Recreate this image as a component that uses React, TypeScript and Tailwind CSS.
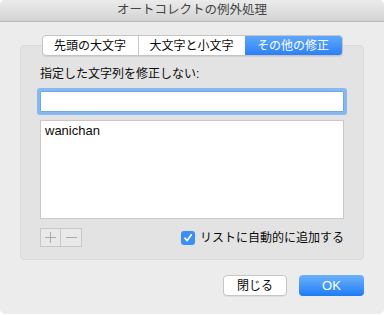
import React from "react";

const tabs = ["先頭の大文字", "大文字と小文字", "その他の修正"];

const App = () => {
  const [active, setActive] = React.useState(2);
  const [autoAdd, setAutoAdd] = React.useState(true);
  const [text, setText] = React.useState("");

  return (
    <div className="w-[384px] h-[315px] bg-white font-['Liberation_Sans','Noto_Sans_CJK_JP',sans-serif] text-[12px] text-[#0a0a0a]">
      <div className="flex flex-col h-[314px] bg-[#ececec] rounded-[5px] overflow-hidden">
        {/* title bar */}
        <div className="h-[22px] shrink-0 flex items-center justify-center bg-gradient-to-b from-[#ebebeb] to-[#d3d3d3] border-b border-[#b9b9b9] text-[#444] text-[12.5px] leading-none">
          オートコレクトの例外処理
        </div>

        <div className="px-[20px] pt-[13px] flex flex-col">
          {/* segmented tabs */}
          <div className="relative z-10 flex justify-center">
            <div className="flex h-[21px] rounded-[4px] border border-[#c4c4c4] bg-white shadow-[0_1px_0_rgba(0,0,0,0.08)] overflow-hidden">
              {tabs.map((t, i) => (
                <button
                  key={t}
                  onClick={() => setActive(i)}
                  className={
                    "flex items-center justify-center leading-none " +
                    (i === 0 ? "w-[95px] " : i === 1 ? "w-[107px] border-l border-[#c8c8c8] " : "w-[97px] ") +
                    (active === i
                      ? "bg-gradient-to-b from-[#5ea8fc] to-[#2a80f7] text-white"
                      : "text-[#0a0a0a]")
                  }
                >
                  {t}
                </button>
              ))}
            </div>
          </div>

          {/* group box */}
          <div className="-mt-[11px] h-[215px] rounded-[4px] bg-[#e3e3e3] border border-[#dadada] px-[19px] pt-[20px] flex flex-col">
            <div className="leading-[16px] h-[16px]">指定した文字列を修正しない:</div>
            <input
              value={text}
              onChange={(e) => setText(e.target.value)}
              className="mt-[9px] h-[21px] w-[304px] bg-white border border-[#6ea6e6] shadow-[0_0_0_3px_#86b9ef] rounded-[1px] outline-none px-1 text-[13px]"
            />
            <div className="mt-[8px] h-[99px] w-[304px] bg-white border border-[#c8c8c8] px-[4px] pt-[2px] text-[13px] leading-[16px]">
              wanichan
            </div>
            <div className="mt-[9px] flex items-center justify-between w-[304px]">
              <div className="flex h-[19px] border border-[#c7c7c7] bg-[#e9e9e9]">
                <div className="w-[20px] flex items-center justify-center border-r border-[#c7c7c7]">
                  <svg width="11" height="11" viewBox="0 0 11 11">
                    <path d="M5.5 0v11M0 5.5h11" stroke="#a8a8a8" strokeWidth="1" />
                  </svg>
                </div>
                <div className="w-[20px] flex items-center justify-center">
                  <svg width="11" height="11" viewBox="0 0 11 11">
                    <path d="M0 5.5h11" stroke="#a8a8a8" strokeWidth="1" />
                  </svg>
                </div>
              </div>
              <label className="flex items-center gap-[5px] cursor-default" onClick={() => setAutoAdd(!autoAdd)}>
                <span
                  className={
                    "w-[14px] h-[14px] rounded-[3px] flex items-center justify-center " +
                    (autoAdd ? "bg-[#3a8ff7]" : "bg-white border border-[#b5b5b5]")
                  }
                >
                  {autoAdd && (
                    <svg width="10" height="10" viewBox="0 0 10 10">
                      <path d="M2 5.2l2.2 2.4L8.3 1.8" fill="none" stroke="white" strokeWidth="1.7" strokeLinecap="round" strokeLinejoin="round" />
                    </svg>
                  )}
                </span>
                <span className="leading-none">リストに自動的に追加する</span>
              </label>
            </div>
          </div>

          {/* buttons */}
          <div className="mt-[15px] flex justify-end gap-[12px]">
            <button className="w-[64px] h-[21px] rounded-[4px] bg-white border border-[#c6c6c6] shadow-[0_1px_0_rgba(0,0,0,0.06)] leading-none">
              閉じる
            </button>
            <button className="w-[65px] h-[21px] rounded-[4px] bg-gradient-to-b from-[#6bb2fb] to-[#1a7bf6] text-white text-[13px] leading-none">
              OK
            </button>
          </div>
        </div>
      </div>
    </div>
  );
};

export default App;
